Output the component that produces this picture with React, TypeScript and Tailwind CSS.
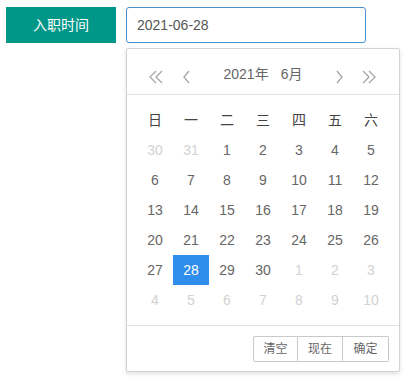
import React from 'react';

const weeks = ['日', '一', '二', '三', '四', '五', '六'];

type Day = { n: number; other?: boolean; sel?: boolean };

const rows: Day[][] = [
    [{ n: 30, other: true }, { n: 31, other: true }, { n: 1 }, { n: 2 }, { n: 3 }, { n: 4 }, { n: 5 }],
    [{ n: 6 }, { n: 7 }, { n: 8 }, { n: 9 }, { n: 10 }, { n: 11 }, { n: 12 }],
    [{ n: 13 }, { n: 14 }, { n: 15 }, { n: 16 }, { n: 17 }, { n: 18 }, { n: 19 }],
    [{ n: 20 }, { n: 21 }, { n: 22 }, { n: 23 }, { n: 24 }, { n: 25 }, { n: 26 }],
    [{ n: 27 }, { n: 28, sel: true }, { n: 29 }, { n: 30 }, { n: 1, other: true }, { n: 2, other: true }, { n: 3, other: true }],
    [4, 5, 6, 7, 8, 9, 10].map((n) => ({ n, other: true })),
];

function Chevron({ dir, double }: { dir: 'l' | 'r'; double?: boolean }) {
    const single = dir === 'l' ? 'M7 1 L2 7 L7 13' : 'M1 1 L6 7 L1 13';
    const pair = dir === 'l' ? 'M8 1 L2 7 L8 13 M14 1 L8 7 L14 13' : 'M2 1 L8 7 L2 13 M8 1 L14 7 L8 13';
    return (
        <svg width={double ? 16 : 9} height="14" viewBox={double ? '0 0 16 14' : '0 0 9 14'} fill="none" stroke="#a6a6a6" strokeWidth="1.3">
            <path d={double ? pair : single} />
        </svg>
    );
}

export default function App() {
    return (
        <div className="w-[407px] h-[382px] bg-white relative font-['Liberation_Sans','Noto_Sans_CJK_SC',sans-serif] text-[14px]">
            <div className="flex items-start pt-[7px] pl-[6px] gap-[10px]">
                <div className="w-[110px] h-[36px] bg-[#009688] text-white flex items-center justify-center">入职时间</div>
                <div className="w-[240px] h-[36px] border border-[#4a90d0] rounded-[3px] flex items-center pl-[10px] text-[#555]">
                    2021-06-28
                </div>
            </div>

            {/* date popup */}
            <div className="absolute left-[126px] top-[48px] w-[274px] border border-[#d2d2d2] rounded-[2px] bg-white shadow-[0_2px_4px_rgba(0,0,0,0.12)]">
                <div className="relative h-[46px] border-b border-[#e2e2e2] flex items-center justify-center pt-[5px] text-[#666]">
                    <span className="absolute left-[21px] top-[21px]"><Chevron dir="l" double /></span>
                    <span className="absolute left-[55px] top-[21px]"><Chevron dir="l" /></span>
                    <span>2021年</span>
                    <span className="ml-[12px]">6月</span>
                    <span className="absolute right-[54px] top-[21px]"><Chevron dir="r" /></span>
                    <span className="absolute right-[22px] top-[21px]"><Chevron dir="r" double /></span>
                </div>
                <div className="p-[10px]">
                    <div className="grid grid-cols-7">
                        {weeks.map((w) => (
                            <div key={w} className="h-[30px] flex items-center justify-center text-[#444]">{w}</div>
                        ))}
                        {rows.flat().map((d, i) => (
                            <div
                                key={i}
                                className={
                                    'h-[30px] flex items-center justify-center ' +
                                    (d.sel ? 'bg-[#2f8eeb] text-white' : d.other ? 'text-[#d2d2d2]' : 'text-[#666]')
                                }
                            >
                                {d.n}
                            </div>
                        ))}
                    </div>
                </div>
                <div className="border-t border-[#e2e2e2] h-[46px] flex items-center justify-end pr-[10px] text-[12px] text-[#666]">
                    <div className="flex">
                        <span className="w-[45px] h-[26px] border border-[#c9c9c9] rounded-l-[2px] flex items-center justify-center">清空</span>
                        <span className="w-[45px] h-[26px] border border-l-0 border-[#c9c9c9] flex items-center justify-center">现在</span>
                        <span className="w-[46px] h-[26px] border border-l-0 border-[#c9c9c9] rounded-r-[2px] flex items-center justify-center">确定</span>
                    </div>
                </div>
            </div>
        </div>
    );
}
